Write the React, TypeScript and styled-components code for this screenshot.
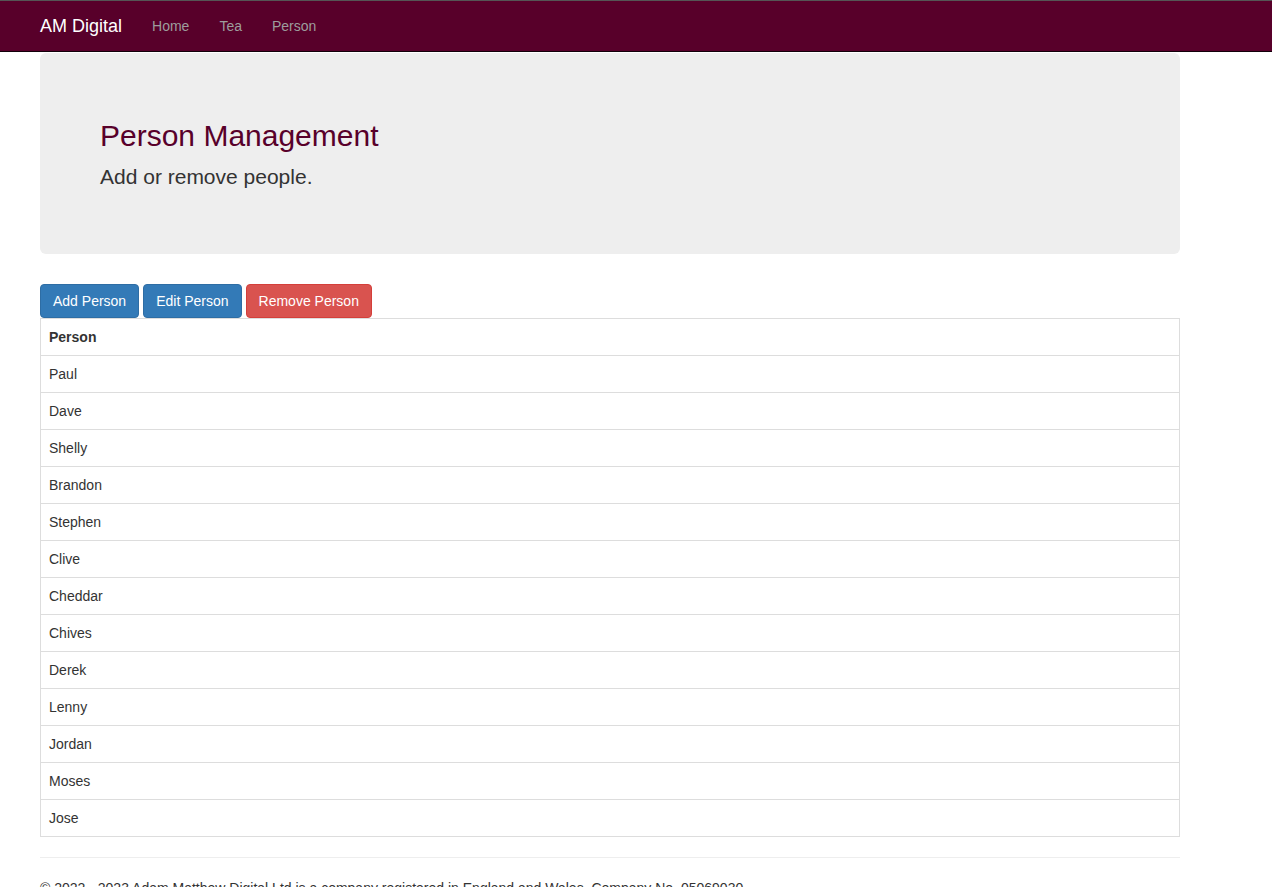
import React from "react";
import styled, { createGlobalStyle } from "styled-components";

const Global = createGlobalStyle`
  html, body { margin: 0; padding: 0; background: #fff; }
  body {
    font-family: "Liberation Sans", Arial, Helvetica, sans-serif;
    font-size: 14px;
    line-height: 20px;
    color: #333;
  }
  * { box-sizing: border-box; }
`;

const NavBar = styled.nav`
  height: 52px;
  background: #58002a;
  border-top: 1px solid #555;
  border-bottom: 1px solid #12000a;
  display: flex;
  align-items: center;
  padding-left: 25px;
`;

const Brand = styled.a`
  color: #fff;
  font-size: 18px;
  line-height: 20px;
  padding: 15px;
  text-decoration: none;
`;

const NavLink = styled.a`
  color: #9d9d9d;
  font-size: 14px;
  line-height: 20px;
  padding: 15px;
  text-decoration: none;
`;

const Container = styled.div`
  width: 1140px;
  margin-left: 40px;
`;

const Jumbotron = styled.div`
  margin-top: 1px;
  background: #eee;
  border-radius: 6px;
  height: 201px;
  padding: 48px 60px;
  margin-bottom: 30px;
`;

const Title = styled.h1`
  margin: 18px 0 10px;
  font-size: 30px;
  line-height: 33px;
  font-weight: 400;
  color: #58002a;
`;

const Lead = styled.p`
  margin: 0;
  font-size: 21px;
  line-height: 30px;
  font-weight: 400;
  color: #333;
`;

const Toolbar = styled.div`
  display: flex;
  gap: 4px;
`;

const Button = styled.button<{ $variant: "primary" | "danger" }>`
  font-family: inherit;
  font-size: 14px;
  line-height: 20px;
  padding: 6px 12px;
  border-radius: 4px;
  border: 1px solid ${(p) => (p.$variant === "danger" ? "#d43f3a" : "#2e6da4")};
  background: ${(p) => (p.$variant === "danger" ? "#d9534f" : "#337ab7")};
  color: #fff;
  cursor: pointer;
  height: 34px;
`;

const Table = styled.table`
  width: 100%;
  border-collapse: collapse;
  border: 1px solid #ddd;
  margin-bottom: 20px;
`;

const Cell = styled.td<{ $head?: boolean }>`
  padding: 8px;
  line-height: 20px;
  border-top: 1px solid #ddd;
  font-weight: ${(p) => (p.$head ? 700 : 400)};
  text-align: left;
  color: #333;
`;

const Rule = styled.hr`
  margin: 20px 0;
  border: 0;
  border-top: 1px solid #eee;
`;

const Footer = styled.p`
  margin: 0;
  font-size: 14px;
  line-height: 20px;
  color: #333;
`;

const people = [
  "Paul",
  "Dave",
  "Shelly",
  "Brandon",
  "Stephen",
  "Clive",
  "Cheddar",
  "Chives",
  "Derek",
  "Lenny",
  "Jordan",
  "Moses",
  "Jose",
];

export default function App() {
  return (
    <>
      <Global />
      <NavBar>
        <Brand href="#">AM Digital</Brand>
        <NavLink href="#">Home</NavLink>
        <NavLink href="#">Tea</NavLink>
        <NavLink href="#">Person</NavLink>
      </NavBar>
      <Container>
        <Jumbotron>
          <Title>Person Management</Title>
          <Lead>Add or remove people.</Lead>
        </Jumbotron>
        <Toolbar>
          <Button $variant="primary">Add Person</Button>
          <Button $variant="primary">Edit Person</Button>
          <Button $variant="danger">Remove Person</Button>
        </Toolbar>
        <Table>
          <tbody>
            <tr>
              <Cell $head>Person</Cell>
            </tr>
            {people.map((p) => (
              <tr key={p}>
                <Cell>{p}</Cell>
              </tr>
            ))}
          </tbody>
        </Table>
        <Rule />
        <Footer>
          © 2022 - 2023 Adam Matthew Digital Ltd is a company registered in England and Wales. Company No. 05069030
        </Footer>
      </Container>
    </>
  );
}
